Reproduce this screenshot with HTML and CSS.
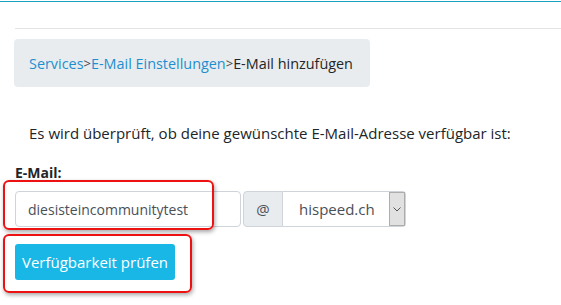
FILE: index.html
```html
<!DOCTYPE html>
<html lang="de">
<head>
<meta charset="utf-8">
<link rel="stylesheet" href="styles.css">
</head>
<body>
<div class="topline"></div>
<div class="page">
  <div class="rule"></div>
  <nav class="crumbs">
    <a class="crumb-link">Services</a><span class="sep">&gt;</span><a class="crumb-link">E-Mail Einstellungen</a><span class="sep">&gt;</span><span class="crumb-current">E-Mail hinzufügen</span>
  </nav>
  <p class="intro">Es wird überprüft, ob deine gewünschte E-Mail-Adresse verfügbar ist:</p>
  <label class="label">E-Mail:</label>
  <div class="group">
    <div class="field">diesisteincommunitytest</div>
    <div class="addon">@</div>
    <div class="select">
      <span class="select-text">hispeed.ch</span>
      <span class="select-btn"><svg width="8" height="5" viewBox="0 0 8 5"><path d="M0.5 0.5 L4 4 L7.5 0.5" fill="none" stroke="#555" stroke-width="1"/></svg></span>
    </div>
    <div class="mark mark-input"></div>
  </div>
  <div class="btn-row">
    <button class="btn">Verfügbarkeit prüfen</button>
    <div class="mark mark-btn"></div>
  </div>
</div>
</body>
</html>
```
FILE: styles.css
```css
* { box-sizing: border-box; }
html, body { margin: 0; padding: 0; background: #fff; }
body {
  font-family: "Open Sans", "Noto Sans", sans-serif;
  font-size: 15px;
  color: #212529;
  width: 561px;
  height: 305px;
  overflow: hidden;
}
.topline {
  margin-top: 1px;
  height: 1px;
  background: #17a2c0;
}
.page { padding-left: 15px; }
.rule {
  margin-top: 26px;
  height: 1px;
  background: #e3e3e3;
}
.crumbs {
  margin-top: 10px;
  margin-left: -1px;
  width: 356px;
  height: 48px;
  background: #e9ecef;
  border-radius: 4px;
  padding: 0 15px;
  display: flex;
  align-items: center;
  font-size: 14.4px;
  white-space: nowrap;
}
.crumb-link { color: #1d8fd0; }
.sep { color: #444; font-size: 13px; }
.crumb-current { color: #212529; }
.intro {
  margin: 35px 0 0 14px;
  line-height: 22px;
}
.label {
  display: block;
  margin-top: 18px;
  font-weight: bold;
  font-size: 14px;
  line-height: 22px;
}
.group {
  position: relative;
  display: flex;
  margin-top: 7px;
  height: 36px;
}
.field {
  width: 226px;
  border: 1px solid #ced4da;
  border-radius: 4px;
  padding: 0 12px;
  display: flex;
  align-items: center;
  color: #495057;
  font-size: 14px;
}
.addon {
  margin-left: 2px;
  width: 40px;
  background: #e9ecef;
  border: 1px solid #ced4da;
  border-radius: 4px 0 0 4px;
  display: flex;
  align-items: center;
  justify-content: center;
  color: #495057;
}
.select {
  width: 123px;
  border: 1px solid #ced4da;
  border-left: none;
  border-radius: 0 4px 4px 0;
  display: flex;
  align-items: stretch;
  justify-content: space-between;
  color: #495057;
  font-size: 15px;
}
.select-text {
  padding-left: 16px;
  display: flex;
  align-items: center;
}
.select-btn {
  width: 16px;
  background: #e1e1e1;
  border: 1px solid #adadad;
  display: flex;
  align-items: center;
  justify-content: center;
}
.btn-row {
  position: relative;
  margin-top: 17px;
  height: 36px;
}
.btn {
  height: 36px;
  width: 160px;
  background: #18b7e6;
  color: #fff;
  border: none;
  border-radius: 3px;
  font-family: inherit;
  font-size: 15px;
  padding: 0;
}
.mark {
  position: absolute;
  border: 2px solid #ee1111;
  border-radius: 6px;
  box-shadow: 1px 2px 4px rgba(0,0,0,0.35);
}
.mark-input { left: -12px; top: -11px; width: 211px; height: 50px; }
.mark-btn { left: -12px; top: -10px; width: 189px; height: 59px; }
```
